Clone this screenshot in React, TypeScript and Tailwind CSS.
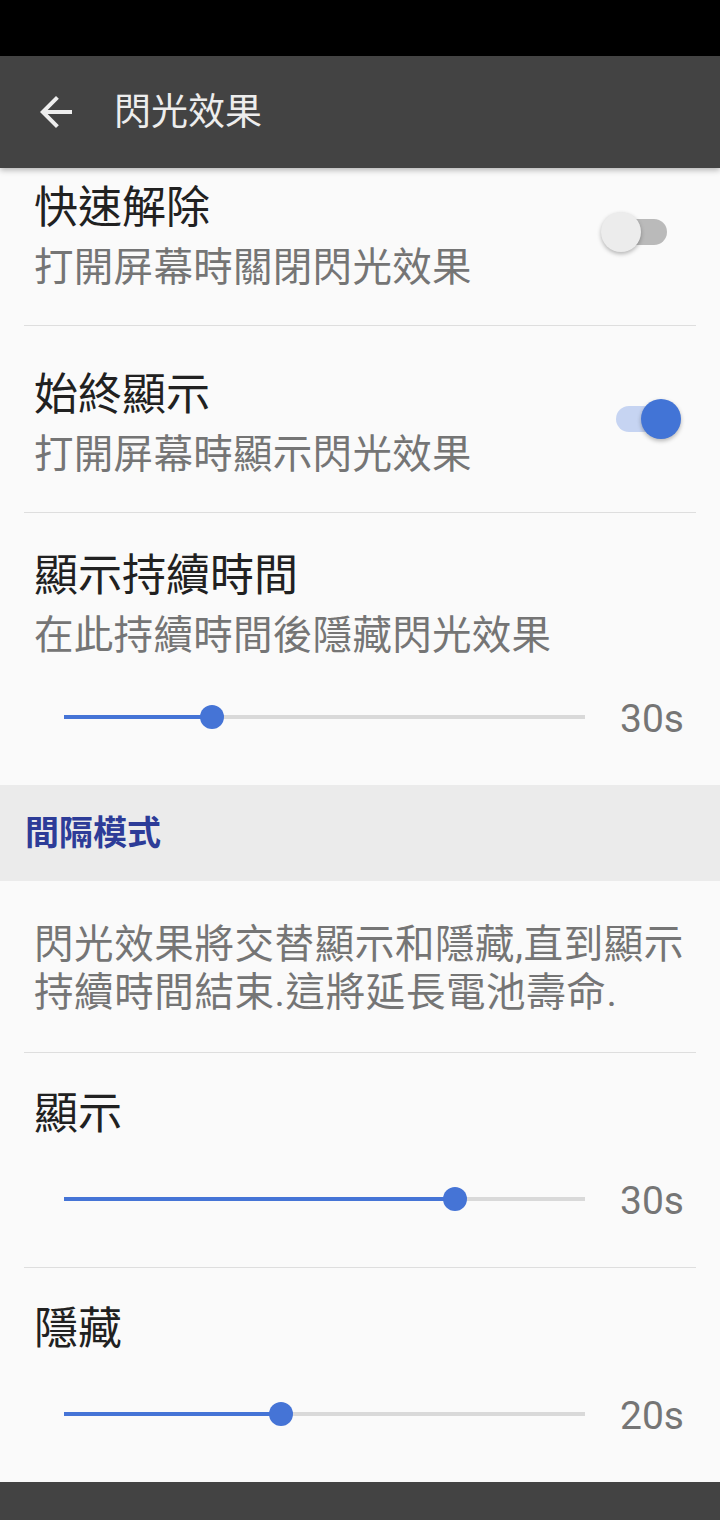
import React from "react";

const FONT = "font-['Roboto','Noto_Sans_CJK_TC',sans-serif]";

function Divider() {
  return <div className="mx-[24px] h-px bg-[#dedede]" />;
}

function Toggle({ on }: { on: boolean }) {
  return (
    <div className="relative h-[40px] w-[80px] shrink-0">
      <div
        className={`absolute left-[15px] top-[7px] h-[26px] w-[51px] rounded-full ${on ? "bg-[#c6d4f2]" : "bg-[#bababa]"}`}
      />
      <div
        className={`absolute top-0 h-[40px] w-[40px] rounded-full shadow-[0_2px_4px_rgba(0,0,0,0.28)] ${on ? "left-[40px] bg-[#4274d6]" : "left-0 bg-[#ececec]"}`}
      />
    </div>
  );
}

function Slider({ value, label }: { value: number; label: string }) {
  return (
    <div className="flex h-[48px] items-center pl-[64px] pr-[36px]">
      <div className="relative h-[4px] w-[521px] bg-[#d9d9d9]">
        <div className="absolute left-0 top-0 h-full bg-[#4574d6]" style={{ width: `${value * 100}%` }} />
        <div
          className="absolute top-1/2 h-[24px] w-[24px] -translate-x-1/2 -translate-y-1/2 rounded-full bg-[#4574d6]"
          style={{ left: `${value * 100}%` }}
        />
      </div>
      <span className="flex-1 pt-[4px] text-right text-[39px] leading-[48px] text-[#757575]">{label}</span>
    </div>
  );
}

function SwitchRow({ title, subtitle, on }: { title: string; subtitle: string; on: boolean }) {
  return (
    <div className="flex h-[186px] items-center pl-[34px] pr-[39px]">
      <div className="flex-1 pb-[27px] pt-[39px]">
        <div className="text-[44px] leading-[60px] text-[#212121]">{title}</div>
        <div className="text-[39.5px] leading-[60px] tracking-[0.3px] text-[#757575]">{subtitle}</div>
      </div>
      <Toggle on={on} />
    </div>
  );
}

export default function App() {
  return (
    <div className={`flex h-[1520px] w-[720px] flex-col overflow-hidden bg-[#fafafa] ${FONT}`}>
      {/* status bar */}
      <div className="h-[56px] shrink-0 bg-black" />

      {/* toolbar */}
      <div className="relative z-10 flex h-[112px] shrink-0 items-center bg-[#434343] shadow-[0_2px_6px_rgba(0,0,0,0.3)]">
        <svg viewBox="0 0 24 24" className="ml-[32px] h-[48px] w-[48px]" fill="#eeeeee">
          <path d="M20 11H7.83l5.59-5.59L12 4l-8 8 8 8 1.41-1.41L7.83 13H20v-2z" />
        </svg>
        <span className="ml-[34px] text-[37px] leading-none text-[#ededed]">閃光效果</span>
      </div>

      {/* scrolled settings list */}
      <div className="flex-1 overflow-hidden">
        <div className="-mt-[29px]">
          <SwitchRow title="快速解除" subtitle="打開屏幕時關閉閃光效果" on={false} />
          <Divider />
          <SwitchRow title="始終顯示" subtitle="打開屏幕時顯示閃光效果" on={true} />
          <Divider />

          <div className="pb-[44px] pt-[33px]">
            <div className="px-[34px]">
              <div className="text-[44px] leading-[60px] text-[#212121]">顯示持續時間</div>
              <div className="text-[39.5px] leading-[60px] tracking-[0.3px] text-[#757575]">在此持續時間後隱藏閃光效果</div>
            </div>
            <div className="mt-[27px]">
              <Slider value={0.284} label="30s" />
            </div>
          </div>

          <div className="flex h-[96px] items-center bg-[#ebebeb] px-[25px]">
            <span className="text-[34px] font-bold leading-none text-[#2d3c98]">間隔模式</span>
          </div>

          <div className="px-[34px] pb-[35px] pt-[40px] text-[39.5px] leading-[48px] tracking-[0.6px] text-[#757575]">
            閃光效果將交替顯示和隱藏,直到顯示
            <br />
            持續時間結束.這將延長電池壽命.
          </div>
          <Divider />

          <div className="pb-[44px] pt-[31px]">
            <div className="px-[34px] text-[44px] leading-[60px] text-[#212121]">顯示</div>
            <div className="mt-[31px]">
              <Slider value={0.75} label="30s" />
            </div>
          </div>
          <Divider />

          <div className="pt-[31px]">
            <div className="px-[34px] text-[44px] leading-[60px] text-[#212121]">隱藏</div>
            <div className="mt-[31px]">
              <Slider value={0.417} label="20s" />
            </div>
          </div>
        </div>
      </div>

      {/* navigation bar */}
      <div className="h-[38px] shrink-0 bg-[#434343]" />
    </div>
  );
}
